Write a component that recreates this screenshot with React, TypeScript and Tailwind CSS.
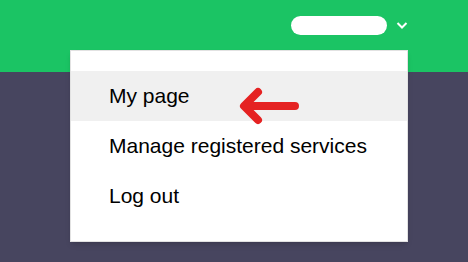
import React from "react";

const items = ["My page", "Manage registered services", "Log out"];

export default function App() {
  return (
    <div
      className="w-[468px] h-[262px] bg-[#47455f] overflow-hidden"
      style={{ fontFamily: '"Liberation Sans", Arial, sans-serif' }}
    >
      <header className="h-[72px] bg-[#1bc464] flex items-start justify-end pr-[60px] pt-4">
        <div className="w-[96px] h-[19px] rounded-full bg-white" />
        <svg className="ml-[9px] mt-[5px]" width="12" height="9" viewBox="0 0 12 9">
          <path d="M1.5 2 L6 6.5 L10.5 2" fill="none" stroke="white" strokeWidth="2" />
        </svg>
      </header>
      <div className="relative">
        <div className="absolute left-[70px] top-[-22px] w-[338px] bg-white border border-[#e2e2e2] shadow-md py-[20px]">
          {items.map((t, i) => (
            <div
              key={t}
              className={`h-[50px] flex items-center pl-[38px] text-[21px] text-black ${i === 0 ? "bg-[#f0f0f0]" : ""}`}
            >
              {t}
            </div>
          ))}
          <svg className="absolute left-[168px] top-[36px]" width="66" height="40" viewBox="0 0 66 40">
            <path
              d="M56 19 L10 19 M19 5 L5 19 L19 33"
              fill="none"
              stroke="#e52222"
              strokeWidth="8"
              strokeLinecap="round"
              strokeLinejoin="round"
            />
          </svg>
        </div>
      </div>
    </div>
  );
}
